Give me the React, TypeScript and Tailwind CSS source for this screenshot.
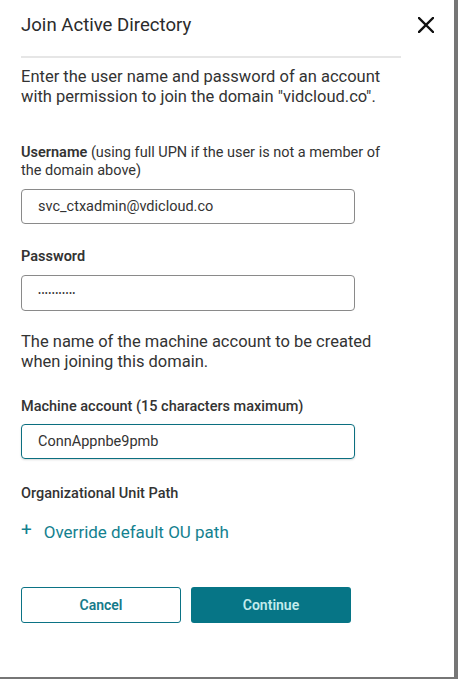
import React from "react";

const font = { fontFamily: "Roboto, 'Liberation Sans', sans-serif" };

export default function App() {
  return (
    <div
      className="w-[458px] h-[679px] box-border bg-white border-r-4 border-b-2 border-[#767676] text-[#333333]"
      style={font}
    >
      <div className="flex items-start">
        <div className="ml-[21px] w-[380px]">
          <div className="pt-[13px] text-[18.6px] leading-[24px] text-[#2b2b2b]">Join Active Directory</div>
          <div className="mt-[19px] h-[2px] bg-[#e6e6e6]" />
        </div>
        <button className="ml-[17px] mt-[17px] w-[16px] h-[16px]" aria-label="Close">
          <svg width="16" height="16" viewBox="0 0 16 16">
            <path d="M1 1 L15 15 M15 1 L1 15" stroke="#111" strokeWidth="2.4" strokeLinecap="square" />
          </svg>
        </button>
      </div>

      <div className="px-[21px] w-[422px] box-border">
        <p className="mt-[9px] text-[16.5px] leading-[20px]">
          Enter the user name and password of an account with permission to join the domain "vidcloud.co".
        </p>

        <div className="mt-[37px] text-[14.5px] leading-[18px] w-[370px]">
          <span className="font-semibold">Username</span> (using full UPN if the user is not a member of the domain above)
        </div>
        <div className="mt-[9px] w-[334px] h-[35px] border border-[#8a8a8a] rounded-[4px] flex items-center pl-[16px] text-[14.5px]">
          svc_ctxadmin@vdicloud.co
        </div>

        <div className="mt-[24px] text-[14.5px] leading-[18px] font-semibold">Password</div>
        <div className="mt-[9px] w-[334px] h-[36px] border border-[#8a8a8a] rounded-[4px] flex items-center pl-[16px]">
          <span className="text-[9px] tracking-[0.4px] leading-none">•••••••••••</span>
        </div>

        <p className="mt-[21px] text-[16.5px] leading-[20px] w-[370px]">
          The name of the machine account to be created when joining this domain.
        </p>

        <div className="mt-[26px] text-[14.5px] leading-[18px] font-medium">Machine account (15 characters maximum)</div>
        <div className="mt-[8px] w-[334px] h-[35px] border border-[#0b6f80] rounded-[4px] flex items-center pl-[16px] text-[14.5px] shadow-[0_1px_2px_rgba(0,0,0,0.15)]">
          ConnAppnbe9pmb
        </div>

        <div className="mt-[26px] text-[14.5px] leading-[18px] font-medium">Organizational Unit Path</div>
        <div className="mt-[19px] flex items-center text-[#14818f] text-[17px] leading-[20px]">
          <span className="text-[19px] leading-[20px] mr-[12px] -mt-[5px]">+</span>
          <span>Override default OU path</span>
        </div>

        <div className="mt-[45px] flex gap-[10px]">
          <button className="w-[160px] h-[36px] border border-[#0b7385] rounded-[3px] text-[#167a8a] text-[14px] font-semibold">
            Cancel
          </button>
          <button className="w-[160px] h-[36px] bg-[#067586] rounded-[3px] text-[#c2ebec] text-[14px] font-semibold">
            Continue
          </button>
        </div>
      </div>
    </div>
  );
}
